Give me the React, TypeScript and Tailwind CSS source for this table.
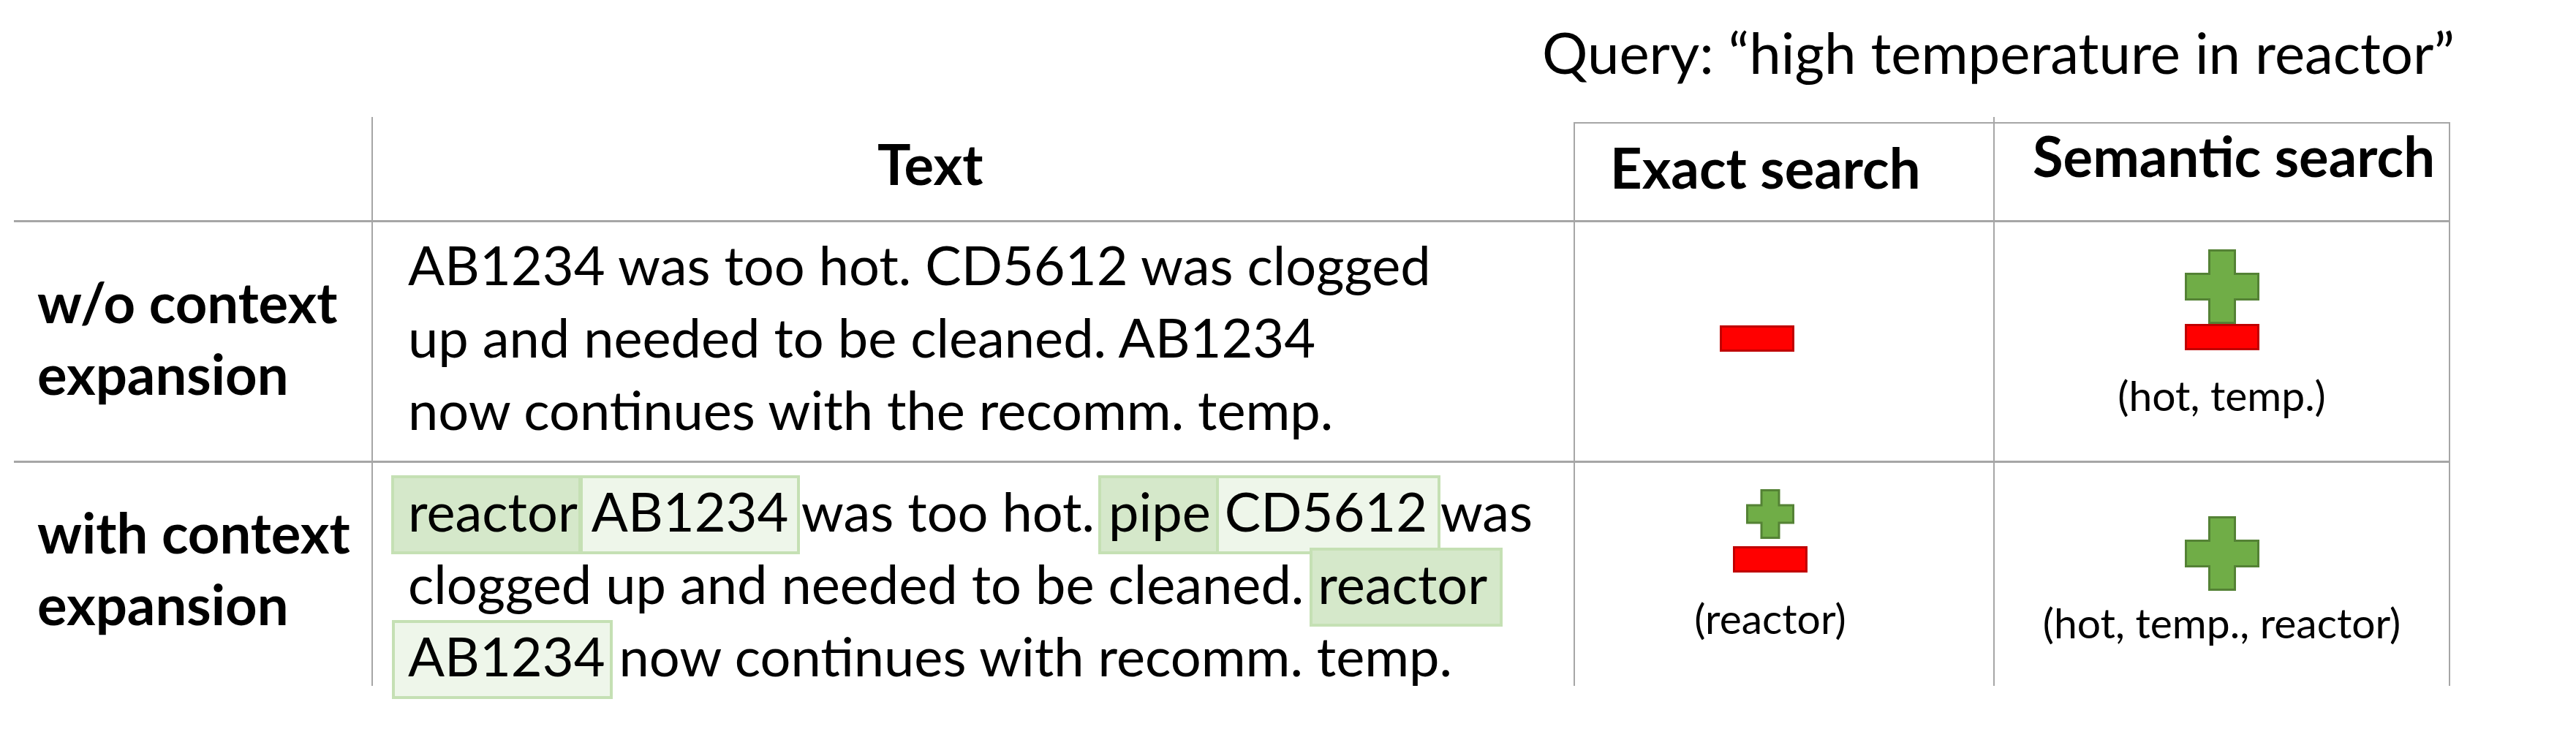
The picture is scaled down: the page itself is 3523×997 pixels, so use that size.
import React from "react";

function BigPlus() {
  return (
    <svg width="102" height="102" viewBox="0 0 102 102" className="block">
      <polygon
        points="33.5,1.5 68.5,1.5 68.5,33.5 100.5,33.5 100.5,68.5 68.5,68.5 68.5,100.5 33.5,100.5 33.5,68.5 1.5,68.5 1.5,33.5 33.5,33.5"
        fill="#70ad47"
        stroke="#548235"
        strokeWidth="3"
      />
    </svg>
  );
}

function SmallPlus() {
  return (
    <svg width="66" height="68" viewBox="0 0 66 68" className="block">
      <polygon
        points="21,1.5 45,1.5 45,22 64.5,22 64.5,46 45,46 45,66.5 21,66.5 21,46 1.5,46 1.5,22 21,22"
        fill="#70ad47"
        stroke="#548235"
        strokeWidth="3"
      />
    </svg>
  );
}

function Minus() {
  return <div className="w-[102px] h-[36px] bg-[#ff0000] border-[3px] border-[#c00000]" />;
}

export default function App() {
  return (
    <div className="w-[3523px] h-[997px] bg-white text-black overflow-hidden font-['Lato',sans-serif]">
      <div className="h-[160px] pt-[22px] pr-[166px] flex justify-end">
        <div className="text-[78px] leading-[99px] whitespace-nowrap">
          Query: {"\u201c"}high temperature in reactor{"\u201d"}
        </div>
      </div>

      <div className="ml-[19px] grid grid-cols-[489px_1644px_574px_625px] grid-rows-[144px_329px_305px]">
        {/* header row */}
        <div className="border-b-[3px] border-[#a6a6a6]" />
        <div className="border-l-2 border-b-[3px] border-[#a6a6a6] pt-[24px] pl-[690px]">
          <div className="text-[76px] leading-[80px] font-bold whitespace-nowrap">Text</div>
        </div>
        <div className="mt-[7px] border-t-2 border-l-2 border-b-[3px] border-[#a6a6a6] pt-[20px] pl-[48px]">
          <div className="text-[76px] leading-[80px] font-bold whitespace-nowrap">Exact search</div>
        </div>
        <div className="border-l-2 border-[#a6a6a6] pt-[7px] flex flex-col">
          <div className="flex-1 border-t-2 border-r-2 border-b-[3px] border-[#a6a6a6] pt-[4px] pl-[52px]">
            <div className="text-[76px] leading-[80px] font-bold whitespace-nowrap">Semantic search</div>
          </div>
        </div>

        {/* row 1 */}
        <div className="border-b-[3px] border-[#a6a6a6] pt-[60px] pl-[32px]">
          <div className="text-[76px] leading-[98px] font-bold whitespace-nowrap">
            w/o context
            <br />
            expansion
          </div>
        </div>
        <div className="border-l-2 border-b-[3px] border-[#a6a6a6] pt-[8px] pl-[48px]">
          <div className="text-[74px] leading-[99px] whitespace-nowrap">
            AB1234 was too hot. CD5612 was clogged
            <br />
            up and needed to be cleaned. AB1234
            <br />
            now continues with the recomm. temp.
          </div>
        </div>
        <div className="border-l-2 border-b-[3px] border-[#a6a6a6] flex flex-col items-center pt-[141px] pr-[74px]">
          <Minus />
        </div>
        <div className="border-l-2 border-r-2 border-b-[3px] border-[#a6a6a6] flex flex-col items-center pt-[37px]">
          <BigPlus />
          <Minus />
          <div className="mt-[30px] text-[57px] leading-[62px] whitespace-nowrap">(hot, temp.)</div>
        </div>

        {/* row 2 */}
        <div className="pt-[46px] pl-[32px]">
          <div className="text-[76px] leading-[98px] font-bold whitespace-nowrap">
            with context
            <br />
            expansion
          </div>
        </div>
        <div className="border-l-2 border-[#a6a6a6] pt-[16px] pl-[48px]">
          <div className="text-[74px] leading-[99px] whitespace-nowrap">
            <span className="bg-[#d5e8ca] border-4 border-[#c5e0b4] -ml-[23px] pl-[19px] -mr-[5px] pr-[1px] pb-[11px]">reactor</span>{" "}
            <span className="bg-[#eef6ea] border-4 border-[#c5e0b4] -ml-[16px] pl-[12px] -mr-[16px] pr-[12px] pb-[11px]">AB1234</span>{" "}
            was too hot.{" "}
            <span className="bg-[#d5e8ca] border-4 border-[#c5e0b4] -ml-[14px] pl-[10px] -mr-[16px] pr-[12px] pb-[11px]">pipe</span>{" "}
            <span className="bg-[#eef6ea] border-4 border-[#c5e0b4] -ml-[12px] pl-[8px] -mr-[18px] pr-[14px] pb-[11px]">CD5612</span>{" "}
            was
            <br />
            clogged up and needed to be cleaned.{" "}
            <span className="bg-[#d5e8ca] border-4 border-[#c5e0b4] -ml-[11px] pl-[7px] -mr-[21px] pr-[17px] pb-[11px]">reactor</span>
            <br />
            <span className="bg-[#eef6ea] border-4 border-[#c5e0b4] -ml-[22px] pl-[18px] -mr-[10px] pr-[6px] pb-[11px]">AB1234</span>{" "}
            now continues with recomm. temp.
          </div>
        </div>
        <div className="border-l-2 border-[#a6a6a6] flex flex-col items-center pt-[36px] pr-[38px]">
          <SmallPlus />
          <div className="mt-[10px]">
            <Minus />
          </div>
          <div className="mt-[31px] text-[57px] leading-[62px] whitespace-nowrap">(reactor)</div>
        </div>
        <div className="border-l-2 border-r-2 border-[#a6a6a6] flex flex-col items-center pt-[73px]">
          <BigPlus />
          <div className="mt-[12px] text-[57px] leading-[62px] whitespace-nowrap">(hot, temp., reactor)</div>
        </div>
      </div>
    </div>
  );
}
